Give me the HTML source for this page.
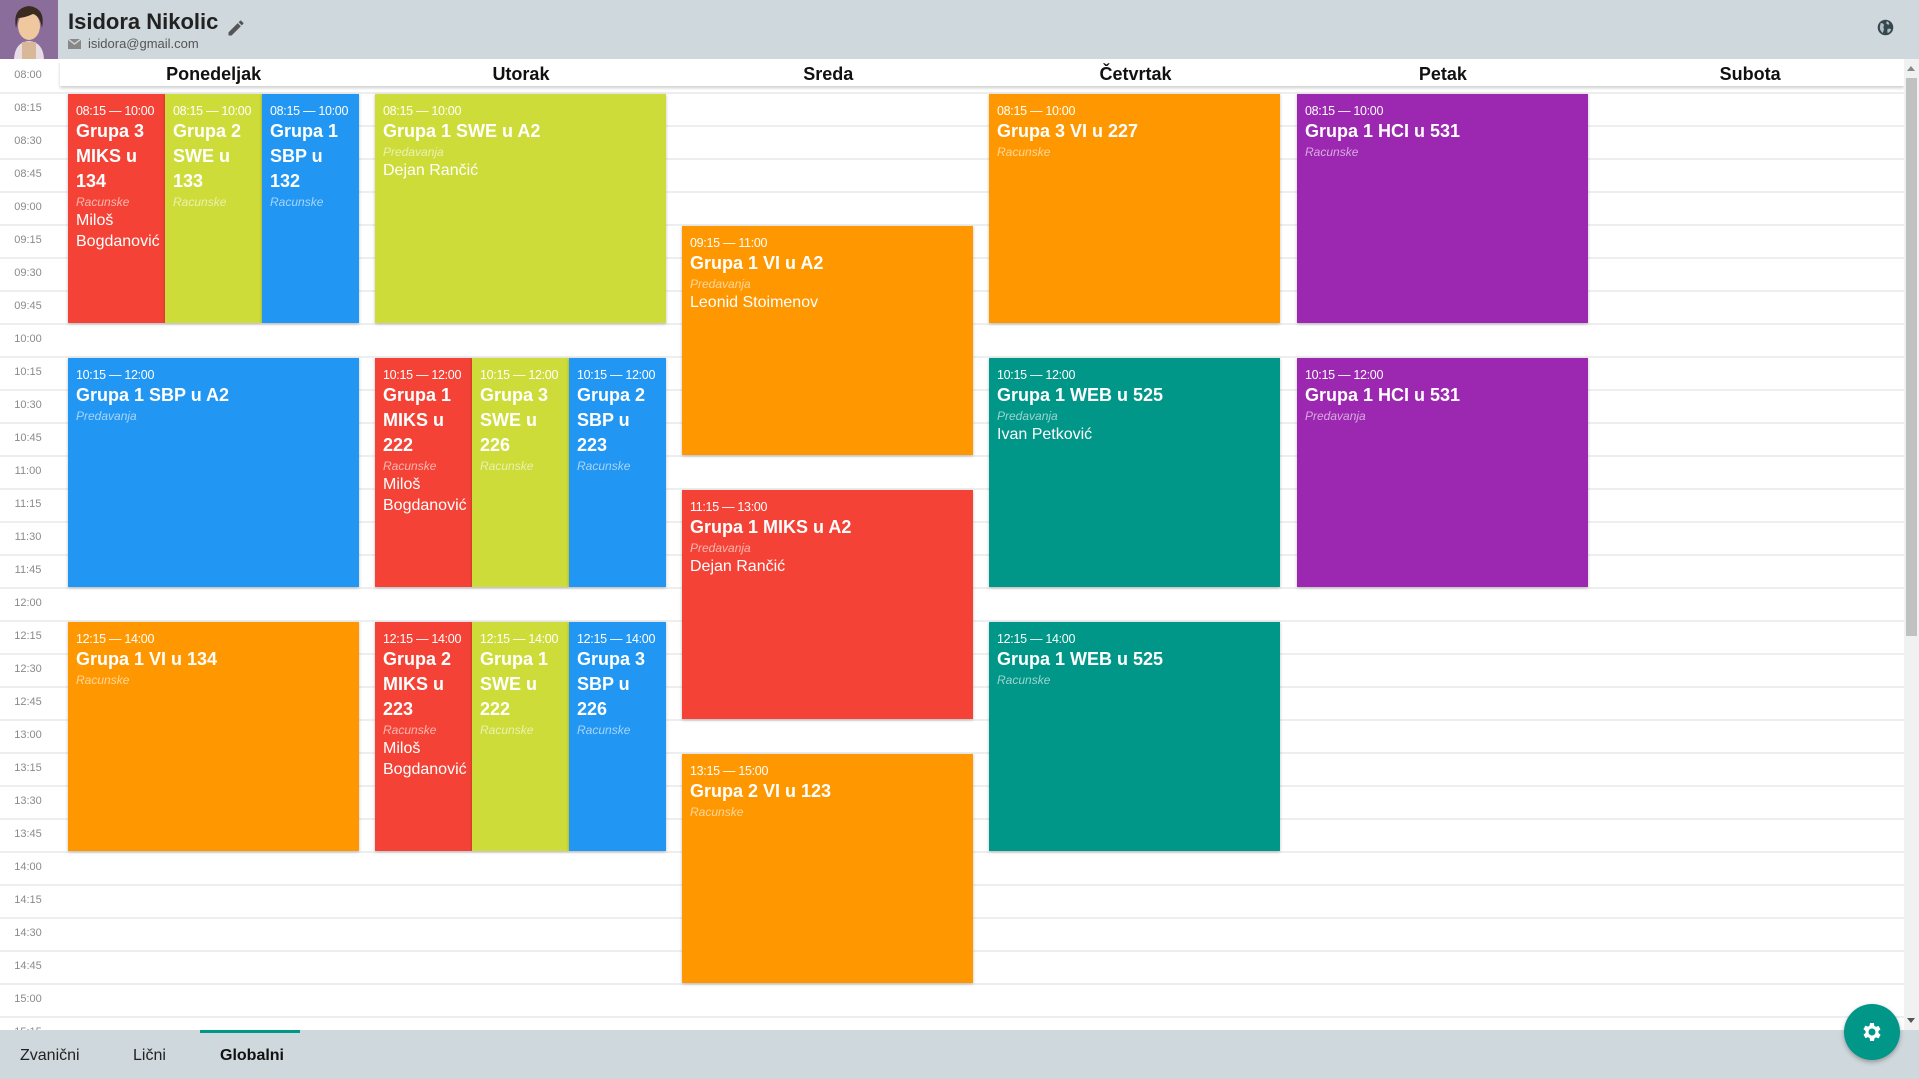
<!DOCTYPE html>
<html><head><meta charset="utf-8"><style>
*{margin:0;padding:0;box-sizing:border-box}
body{width:1919px;height:1079px;overflow:hidden;position:relative;font-family:"Liberation Sans",sans-serif;background:#fff}
.hdr{position:absolute;left:0;top:0;width:1919px;height:59px;background:#cfd8dc}
.grid{position:absolute;left:0;top:61px;width:1904px;height:969px;background:repeating-linear-gradient(to bottom,#fff 0,#fff 31px,#eee 31px,#eee 33px)}
.tl{position:absolute;left:8px;width:40px;font-size:11px;color:#8a8a8a;text-align:center;margin-top:1px}
.days{position:absolute;left:60px;top:61px;width:1844px;height:25px;background:#fff;box-shadow:0 2px 3px rgba(0,0,0,.2);display:flex}
.days div{width:307.3px;text-align:center;font-weight:bold;font-size:18px;line-height:27px;color:#111}
.e{position:absolute;height:229px;color:#fff;padding:9px 8px 0 8px;box-shadow:0 1px 3px rgba(0,0,0,.25);overflow:hidden}
.e .t{font-size:12.5px;line-height:16px;white-space:nowrap;letter-spacing:-.3px}
.e .g{font-size:18px;font-weight:bold;line-height:25px}
.e .k{font-size:12px;line-height:16px;font-style:italic;opacity:.6}
.e .n{font-size:16px;line-height:21px}
.r{background:#f44336}.l{background:#cddc39}.b{background:#2196f3}.o{background:#ff9800}.p{background:#9c27b0}.c{background:#009688}
.w{width:291px}.s{width:97px}
.bot{position:absolute;left:0;top:1030px;width:1919px;height:49px;background:#cfd8dc}
.tab{position:absolute;top:17px;font-size:16px;color:#222}
</style></head><body>
<div class="grid"></div>
<div class="tl" style="top:68px">08:00</div><div class="tl" style="top:101px">08:15</div><div class="tl" style="top:134px">08:30</div><div class="tl" style="top:167px">08:45</div><div class="tl" style="top:200px">09:00</div><div class="tl" style="top:233px">09:15</div><div class="tl" style="top:266px">09:30</div><div class="tl" style="top:299px">09:45</div><div class="tl" style="top:332px">10:00</div><div class="tl" style="top:365px">10:15</div><div class="tl" style="top:398px">10:30</div><div class="tl" style="top:431px">10:45</div><div class="tl" style="top:464px">11:00</div><div class="tl" style="top:497px">11:15</div><div class="tl" style="top:530px">11:30</div><div class="tl" style="top:563px">11:45</div><div class="tl" style="top:596px">12:00</div><div class="tl" style="top:629px">12:15</div><div class="tl" style="top:662px">12:30</div><div class="tl" style="top:695px">12:45</div><div class="tl" style="top:728px">13:00</div><div class="tl" style="top:761px">13:15</div><div class="tl" style="top:794px">13:30</div><div class="tl" style="top:827px">13:45</div><div class="tl" style="top:860px">14:00</div><div class="tl" style="top:893px">14:15</div><div class="tl" style="top:926px">14:30</div><div class="tl" style="top:959px">14:45</div><div class="tl" style="top:992px">15:00</div><div class="tl" style="top:1025px">15:15</div>

<div class="e r s" style="left:68px;top:94px"><div class="t">08:15 — 10:00</div><div class="g">Grupa 3 MIKS u 134</div><div class="k">Racunske</div><div class="n">Miloš Bogdanović</div></div>
<div class="e l s" style="left:165px;top:94px"><div class="t">08:15 — 10:00</div><div class="g">Grupa 2 SWE u 133</div><div class="k">Racunske</div></div>
<div class="e b s" style="left:262px;top:94px"><div class="t">08:15 — 10:00</div><div class="g">Grupa 1 SBP u 132</div><div class="k">Racunske</div></div>
<div class="e b w" style="left:68px;top:358px"><div class="t">10:15 — 12:00</div><div class="g">Grupa 1 SBP u A2</div><div class="k">Predavanja</div></div>
<div class="e o w" style="left:68px;top:622px"><div class="t">12:15 — 14:00</div><div class="g">Grupa 1 VI u 134</div><div class="k">Racunske</div></div>

<div class="e l w" style="left:375px;top:94px"><div class="t">08:15 — 10:00</div><div class="g">Grupa 1 SWE u A2</div><div class="k">Predavanja</div><div class="n">Dejan Rančić</div></div>
<div class="e r s" style="left:375px;top:358px"><div class="t">10:15 — 12:00</div><div class="g">Grupa 1 MIKS u 222</div><div class="k">Racunske</div><div class="n">Miloš Bogdanović</div></div>
<div class="e l s" style="left:472px;top:358px"><div class="t">10:15 — 12:00</div><div class="g">Grupa 3 SWE u 226</div><div class="k">Racunske</div></div>
<div class="e b s" style="left:569px;top:358px"><div class="t">10:15 — 12:00</div><div class="g">Grupa 2 SBP u 223</div><div class="k">Racunske</div></div>
<div class="e r s" style="left:375px;top:622px"><div class="t">12:15 — 14:00</div><div class="g">Grupa 2 MIKS u 223</div><div class="k">Racunske</div><div class="n">Miloš Bogdanović</div></div>
<div class="e l s" style="left:472px;top:622px"><div class="t">12:15 — 14:00</div><div class="g">Grupa 1 SWE u 222</div><div class="k">Racunske</div></div>
<div class="e b s" style="left:569px;top:622px"><div class="t">12:15 — 14:00</div><div class="g">Grupa 3 SBP u 226</div><div class="k">Racunske</div></div>

<div class="e o w" style="left:682px;top:226px"><div class="t">09:15 — 11:00</div><div class="g">Grupa 1 VI u A2</div><div class="k">Predavanja</div><div class="n">Leonid Stoimenov</div></div>
<div class="e r w" style="left:682px;top:490px"><div class="t">11:15 — 13:00</div><div class="g">Grupa 1 MIKS u A2</div><div class="k">Predavanja</div><div class="n">Dejan Rančić</div></div>
<div class="e o w" style="left:682px;top:754px"><div class="t">13:15 — 15:00</div><div class="g">Grupa 2 VI u 123</div><div class="k">Racunske</div></div>

<div class="e o w" style="left:989px;top:94px"><div class="t">08:15 — 10:00</div><div class="g">Grupa 3 VI u 227</div><div class="k">Racunske</div></div>
<div class="e c w" style="left:989px;top:358px"><div class="t">10:15 — 12:00</div><div class="g">Grupa 1 WEB u 525</div><div class="k">Predavanja</div><div class="n">Ivan Petković</div></div>
<div class="e c w" style="left:989px;top:622px"><div class="t">12:15 — 14:00</div><div class="g">Grupa 1 WEB u 525</div><div class="k">Racunske</div></div>

<div class="e p w" style="left:1297px;top:94px"><div class="t">08:15 — 10:00</div><div class="g">Grupa 1 HCI u 531</div><div class="k">Racunske</div></div>
<div class="e p w" style="left:1297px;top:358px"><div class="t">10:15 — 12:00</div><div class="g">Grupa 1 HCI u 531</div><div class="k">Predavanja</div></div>

<div class="days"><div>Ponedeljak</div><div>Utorak</div><div>Sreda</div><div>Četvrtak</div><div>Petak</div><div>Subota</div></div>

<div style="position:absolute;left:1904px;top:59px;width:15px;height:971px;background:#f1f1f1"></div>
<div style="position:absolute;left:1906px;top:78px;width:11px;height:558px;background:#c1c1c1"></div>
<div style="position:absolute;left:1907px;top:66px;border:4px solid transparent;border-bottom:5px solid #888;border-top:0"></div>
<div style="position:absolute;left:1907px;top:1018px;border:4px solid transparent;border-top:5px solid #555;border-bottom:0"></div>

<div class="hdr">
 <div style="position:absolute;left:0;top:0;width:58px;height:59px;background:#8a6d9a;overflow:hidden">
  <svg width="58" height="59" viewBox="0 0 58 59"><path d="M14 59 Q15 42 29 41 Q43 42 44 59Z" fill="#e8dde4"/><path d="M22 42h14v17H22z" fill="#d9b89a"/><ellipse cx="29" cy="26" rx="11" ry="14" fill="#f0c8a0"/><path d="M16 28 Q12 8 29 6 Q46 8 42 28 Q40 16 33 14 Q24 18 18 18Z" fill="#3b2a20"/></svg>
 </div>
 <div style="position:absolute;left:68px;top:9px;font-size:22px;font-weight:bold;color:#222">Isidora Nikolic</div>
 <svg style="position:absolute;left:68px;top:39px" width="13" height="10" viewBox="0 0 13 10"><rect width="13" height="10" fill="#888"/><path d="M0 0 L6.5 5 L13 0" fill="none" stroke="#cfd8dc" stroke-width="1.3"/></svg>
 <div style="position:absolute;left:88px;top:36px;font-size:13px;color:#555">isidora@gmail.com</div>
 <svg style="position:absolute;left:226px;top:18px" width="20" height="20" viewBox="0 0 24 24"><path d="M3 17.25V21h3.75L17.8 9.94l-3.75-3.75L3 17.25zM20.7 7.04a1 1 0 000-1.41l-2.34-2.34a1 1 0 00-1.41 0l-1.83 1.83 3.75 3.75 1.83-1.83z" fill="#555"/></svg>
 <svg style="position:absolute;left:1877px;top:19px" width="17" height="17" viewBox="0 0 24 24"><circle cx="12" cy="12" r="11" fill="#37474f"/><path d="M5 6 Q9 5 10 9 Q8 12 10 14 Q9 18 8 20 Q4 16 4 12Z M14 3 Q18 5 17 8 Q14 8 13 6Z M15 14 Q19 13 20 15 Q18 19 15 20 Q14 17 15 14Z" fill="#b0bec5"/></svg>
</div>

<div class="bot">
 <div style="position:absolute;left:200px;top:0;width:100px;height:3px;background:#009688"></div>
 <div class="tab" style="left:20px">Zvanični</div>
 <div class="tab" style="left:133px">Lični</div>
 <div class="tab" style="left:220px;font-weight:bold;color:#111">Globalni</div>
</div>

<div style="position:absolute;left:1844px;top:1004px;width:56px;height:56px;border-radius:50%;background:#009688;box-shadow:0 2px 5px rgba(0,0,0,.3)">
 <svg style="position:absolute;left:16px;top:16px" width="24" height="24" viewBox="0 0 24 24"><path fill="#fff" d="M19.4 13a7.5 7.5 0 000-2l2.1-1.6-2-3.5-2.5 1a7.3 7.3 0 00-1.7-1L15 3h-4l-.4 2.6a7.3 7.3 0 00-1.7 1l-2.5-1-2 3.5L6.6 11a7.5 7.5 0 000 2l-2.1 1.6 2 3.5 2.5-1a7.3 7.3 0 001.7 1L11 21h4l.4-2.6a7.3 7.3 0 001.7-1l2.5 1 2-3.5zM13 15.5a3.5 3.5 0 110-7 3.5 3.5 0 010 7z" transform="translate(-1 0)"/></svg>
</div>
</body></html>
